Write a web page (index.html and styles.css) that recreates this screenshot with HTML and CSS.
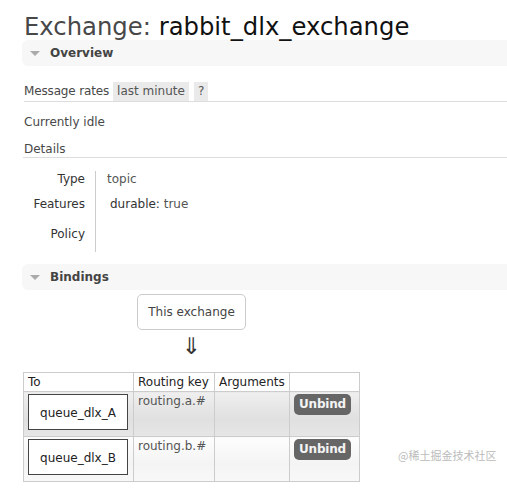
FILE: index.html
```html
<!DOCTYPE html>
<html>
<head>
<meta charset="utf-8">
<link rel="stylesheet" href="styles.css">
</head>
<body>
<div class="page">
  <h1><span class="h1-label">Exchange:</span> <span class="h1-name">rabbit_dlx_exchange</span></h1>

  <h2 class="bar"><span class="tri"></span>Overview</h2>
  <div class="rates">
    <span class="rates-label">Message rates</span>
    <span class="pill">last minute</span>
    <span class="pill">?</span>
  </div>
  <p class="idle">Currently idle</p>
  <h3 class="details">Details</h3>
  <div class="facts">
    <div class="fk">Type</div><div class="fv">topic</div>
    <div class="fk">Features</div><div class="fv"><span class="feat"><span class="feat-k">durable:</span> true</span></div>
    <div class="fk">Policy</div><div class="fv"></div>
  </div>

  <h2 class="bar bar-bind"><span class="tri"></span>Bindings</h2>
  <div class="bindings">
    <div class="this-ex">This exchange</div>
    <div class="arrow">⇓</div>
    <table class="list">
      <colgroup><col class="c1"><col class="c2"><col class="c3"><col class="c4"></colgroup>
      <thead>
        <tr><th>To</th><th>Routing key</th><th>Arguments</th><th></th></tr>
      </thead>
      <tbody>
        <tr class="alt1">
          <td><span class="queue">queue_dlx_A</span></td>
          <td>routing.a.#</td>
          <td></td>
          <td><span class="btn">Unbind</span></td>
        </tr>
        <tr class="alt2">
          <td><span class="queue">queue_dlx_B</span></td>
          <td>routing.b.#</td>
          <td></td>
          <td><span class="btn">Unbind</span></td>
        </tr>
      </tbody>
    </table>
  </div>
</div>
<div class="watermark">@稀土掘金技术社区</div>
</body>
</html>
```

FILE: styles.css
```css
* { box-sizing: border-box; }
html, body { margin: 0; padding: 0; background: #fff; }
body {
  font-family: "DejaVu Sans", Verdana, sans-serif;
  font-size: 12px;
  color: #484848;
  width: 507px;
  height: 503px;
  overflow: hidden;
  position: relative;
}
.page { padding-left: 22px; }

h1 {
  margin: 13px 0 0 2px;
  font-size: 24.3px;
  line-height: 27px;
  font-weight: normal;
  white-space: nowrap;
}
.h1-label { color: #484848; }
.h1-name { color: #111; }

.bar {
  margin: 0;
  height: 26px;
  line-height: 26px;
  font-size: 12px;
  font-weight: bold;
  color: #444;
  background: #f7f7f7;
  border-radius: 6px 0 0 6px;
  display: flex;
  align-items: center;
  padding-left: 8px;
}
.tri {
  width: 0; height: 0;
  border-left: 5px solid transparent;
  border-right: 5px solid transparent;
  border-top: 5px solid #aaa;
  margin-right: 10px;
  margin-top: 1px;
}

.rates {
  margin: 16px 0 0 2px;
  height: 20px;
  border-bottom: 1px solid #ddd;
  display: flex;
  align-items: flex-start;
  gap: 5px;
  line-height: 19px;
}
.rates-label { margin-right: -1px; letter-spacing: -0.15px; }
.pill {
  background: #eaeaea;
  height: 19px;
  padding: 0 4px;
  color: #555;
}

.idle {
  margin: 10px 0 0 2px;
  line-height: 20px;
}
.details {
  margin: 9px 0 0 1px;
  padding-left: 1px;
  font-size: 12px;
  font-weight: normal;
  line-height: 16px;
  height: 17px;
  border-bottom: 1px solid #ddd;
}

.facts {
  margin-top: 13px;
  display: grid;
  grid-template-columns: 73px 1fr;
  grid-template-rows: 25px 30px 26px;
  line-height: 16px;
}
.fk {
  text-align: right;
  padding-right: 10px;
  color: #333;
}
.fv {
  border-left: 1px solid #ccc;
  padding-left: 11px;
  color: #555;
}
.feat { padding-left: 3px; }
.feat-k { color: #333; }

.bar-bind { margin-top: 12px; }

.bindings {
  width: 337px;
  margin-left: 1px;
  display: flex;
  flex-direction: column;
  align-items: center;
}
.this-ex {
  margin-top: 4px;
  height: 36px;
  width: 109px;
  border: 1px solid #ccc;
  border-radius: 5px;
  display: flex;
  align-items: center;
  justify-content: center;
  color: #444;
}
.arrow {
  height: 42px;
  font-size: 23px;
  line-height: 32px;
  color: #333;
}

.list {
  align-self: stretch;
  border-collapse: collapse;
  table-layout: fixed;
  width: 337px;
}
.c1 { width: 110px; }
.c2 { width: 81px; }
.c3 { width: 75px; }
.c4 { width: 70px; }
.list th, .list td {
  border: 1px solid #ccc;
  text-align: left;
  vertical-align: top;
  padding: 2px 4px 0 4px;
  line-height: 14px;
  white-space: nowrap;
}
.list th {
  font-weight: normal;
  color: #222;
  height: 19px;
  padding-top: 2px;
}
.list td { height: 45px; color: #555; }
.alt1 td { background: linear-gradient(#efefef, #e0e0e0 60%, #e6e6e6); }
.alt2 td { background: linear-gradient(#fdfdfd, #f4f4f4 60%, #f8f8f8); }
.queue {
  display: flex;
  align-items: center;
  justify-content: center;
  width: 100px;
  height: 36px;
  border: 1px solid #444;
  background: #fff;
  color: #222;
  padding-top: 2px;
}
.btn {
  display: inline-block;
  background: #666;
  color: #f4f4f4;
  font-weight: bold;
  border-radius: 5px;
  height: 21px;
  line-height: 21px;
  padding: 0 5px;
  letter-spacing: -0.2px;
}

.watermark {
  position: absolute;
  left: 398px;
  top: 447px;
  font-family: "Noto Sans CJK SC", "DejaVu Sans", sans-serif;
  font-size: 11px;
  line-height: 16px;
  color: #bbb;
}
```
